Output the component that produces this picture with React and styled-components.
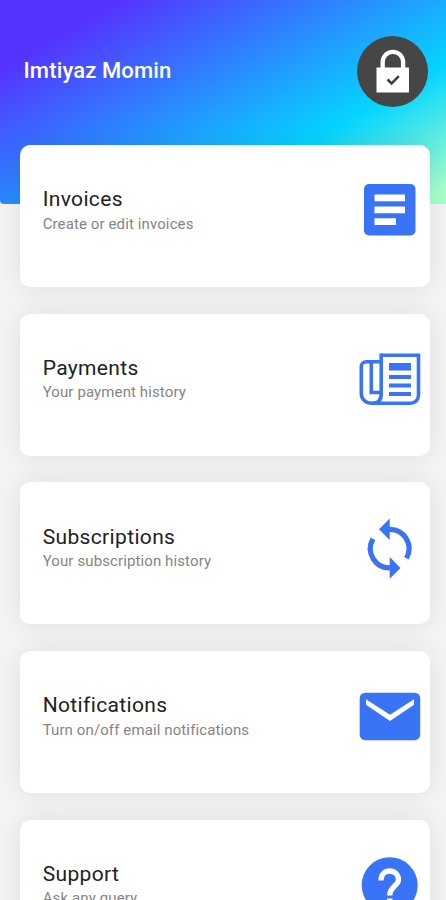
import React from "react";
import styled, { createGlobalStyle } from "styled-components";

const GlobalStyle = createGlobalStyle`
  * { box-sizing: border-box; }
  html, body { margin: 0; height: 100%; overflow: hidden; }
  body { background: #f4f4f4; font-family: Roboto, "Liberation Sans", sans-serif; }
`;

const Page = styled.main`
  width: 100%;
  height: 900px;
  overflow: hidden;
  background: #f4f4f4;
`;

const Header = styled.header`
  display: flex;
  justify-content: space-between;
  align-items: flex-start;
  height: 204px;
  padding: 36px 18px 0 23.5px;
  border-bottom-left-radius: 4px;
  background: linear-gradient(150deg, #5533ff 15%, #05d5ff 70%, #a6ffcb 96%);
`;

const UserName = styled.h1`
  margin: 21px 0 0;
  font-size: 22px;
  line-height: 28px;
  font-weight: 500;
  letter-spacing: 0.14px;
  color: #fff;
  white-space: nowrap;
`;

const Avatar = styled.div`
  width: 71px;
  height: 71px;
  border-radius: 50%;
  background: #464646;
`;

const CardList = styled.section`
  display: flex;
  flex-direction: column;
  gap: 26.7px;
  margin-top: -59.2px;
  padding: 0 16.5px 0 19.7px;
`;

const Card = styled.article`
  display: flex;
  flex: none;
  justify-content: space-between;
  height: 142px;
  padding: 29.5px 3.5px 0 23px;
  border-radius: 10px;
  background: #fff;
  box-shadow: 0 0 28px rgba(0, 0, 0, 0.09);
`;

const CardText = styled.div`
  padding-top: 11.9px;
`;

const CardTitle = styled.h2`
  margin: 0;
  font-size: 21px;
  line-height: 26px;
  font-weight: 400;
  letter-spacing: 0.35px;
  color: #212121;
`;

const CardSubtitle = styled.p`
  margin: 1.4px 0 0;
  font-size: 15px;
  line-height: 20px;
  letter-spacing: 0.11px;
  color: #858585;
`;

const Icon = styled.svg`
  display: block;
  flex: none;
  width: 72px;
  height: 72px;
  color: #3974f6;
`;

const LockIcon = () => (
  <svg width="71" height="71" viewBox="0 0 71 71" fill="none">
    <path d="M25.7 34v-8a10.2 10.2 0 0 1 20.4 0v8" stroke="#fff" strokeWidth="4.3" />
    <path d="M19.5 31.5h32.5v25H19.5z" fill="#fff" />
    <path d="M30.5 43.5l4.1 4 7.2-7.3" stroke="#3e3e3e" strokeWidth="2.5" />
  </svg>
);

const InvoiceIcon = () => (
  <Icon viewBox="0 0 72 72">
    <rect x="10" y="10" width="51.5" height="51.5" rx="5" fill="currentColor" />
    <path d="M20.5 20.500h30.5v6.8H20.5zM20.5 32.500h30.5v6.8H20.5zM20.5 44.3h21.5v6.8H20.5z" fill="#fff" />
  </Icon>
);

const PaymentIcon = () => (
  <Icon viewBox="0 0 72 72" fill="none">
    <g stroke="currentColor" strokeWidth="3.6">
      <path d="M27 12.3h37.5v40a8 8 0 0 1-8 8H18C11.500 60.300 7.300 56 7.300 50.500V23.500C7.300 20.500 9.500 18.700 12.500 18.700H27" />
      <path d="M27.200 10.500V51C27.200 57 24 60.300 18.500 60.300" />
      <path d="M17.300 18.700V49.500H27.200" />
    </g>
    <path d="M35 20h22v7.500H35zM35 32h22v4H35zM35 40.500h22v4H35zM35 49h22v4H35z" fill="currentColor" />
  </Icon>
);

const SyncIcon = () => (
  <Icon viewBox="0 0 72 72" fill="none">
    <g stroke="currentColor" strokeWidth="5.2">
      <path d="M35 17.300A19.300 19.300 0 0 1 52.400 46.300" />
      <path d="M36.400 55.900A19.300 19.300 0 0 1 19 26.900" />
    </g>
    <path d="M25 17.300L35.700 6.500v21.600zM46.500 55.900L35.700 45.100v21.600z" fill="currentColor" />
  </Icon>
);

const MailIcon = () => (
  <Icon viewBox="0 0 72 72">
    <rect x="5.700" y="12.700" width="60.500" height="47.500" rx="5.500" fill="currentColor" />
    <path d="M12 19.300l24 15.500 24-15.500v5.500L36 41 12 24.800z" fill="#fff" />
  </Icon>
);

const SupportIcon = () => (
  <Icon viewBox="0 0 72 72" fill="none">
    <circle cx="35.700" cy="36.200" r="28" fill="currentColor" />
    <path d="M27 31.500C27 25 31 22 35.700 22S44.500 25.500 44.500 30.500C44.500 37 35.700 37.500 35.700 46.500" stroke="#fff" strokeWidth="5.300" />
    <path d="M33 49.500h5.500v5.500H33z" fill="#fff" />
  </Icon>
);

const items = [
  { title: "Invoices", subtitle: "Create or edit invoices", Symbol: InvoiceIcon },
  { title: "Payments", subtitle: "Your payment history", Symbol: PaymentIcon },
  { title: "Subscriptions", subtitle: "Your subscription history", Symbol: SyncIcon },
  { title: "Notifications", subtitle: "Turn on/off email notifications", Symbol: MailIcon },
  { title: "Support", subtitle: "Ask any query", Symbol: SupportIcon },
];

export default function App() {
  return (
    <>
      <GlobalStyle />
      <Page>
        <Header>
          <UserName>Imtiyaz Momin</UserName>
          <Avatar><LockIcon /></Avatar>
        </Header>
        <CardList>
          {items.map(({ title, subtitle, Symbol }) => (
            <Card key={title}>
              <CardText>
                <CardTitle>{title}</CardTitle>
                <CardSubtitle>{subtitle}</CardSubtitle>
              </CardText>
              <Symbol />
            </Card>
          ))}
        </CardList>
      </Page>
    </>
  );
}
